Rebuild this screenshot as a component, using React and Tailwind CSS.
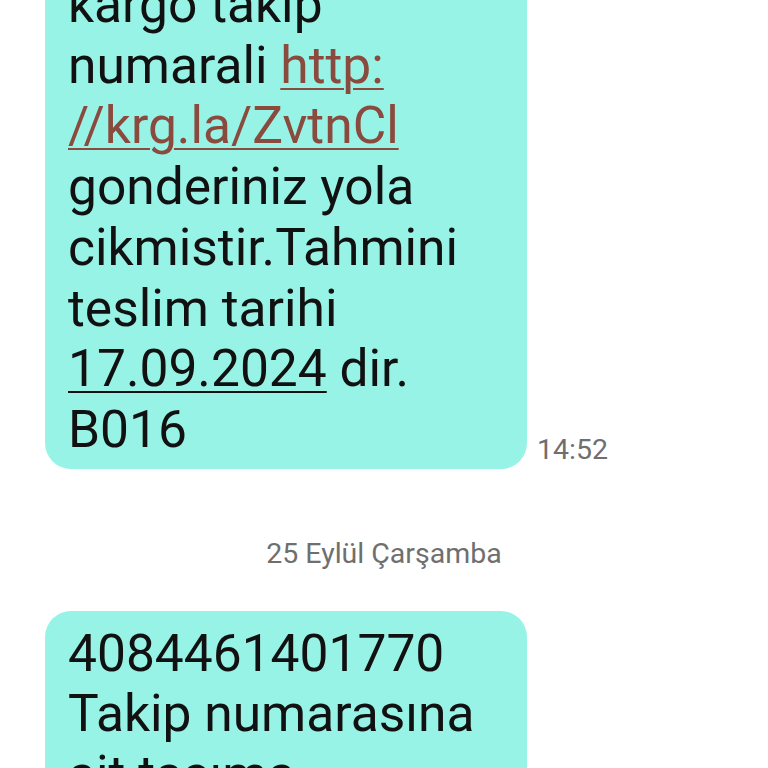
export default function App() {
  const font = { fontFamily: "Roboto, 'Noto Sans', sans-serif" };
  return (
    <div className="h-[768px] w-[768px] overflow-hidden bg-white" style={font}>
      <div className="-mt-[38px] flex items-end pl-[45px]">
        <div className="w-[482px] rounded-[26px] bg-[#98f3e7] pl-[23px] pr-4 pt-[13px] pb-[8px] text-[51.5px] leading-[60.7px] text-[#111]">
          <div>kargo takip</div>
          <div>
            numarali <span className="text-[#8a4a3d] underline decoration-2 underline-offset-[5px]">http:</span>
          </div>
          <div className="text-[#8a4a3d] underline decoration-2 underline-offset-[5px]">//krg.la/ZvtnCl</div>
          <div>gonderiniz yola</div>
          <div>cikmistir.Tahmini</div>
          <div>teslim tarihi</div>
          <div>
            <span className="underline decoration-2 underline-offset-[5px]">17.09.2024</span> dir.
          </div>
          <div>B016</div>
        </div>
        <div className="ml-[10px] pb-[3px] text-[28.5px] leading-[32px] text-[#6f6f6f]">14:52</div>
      </div>
      <div className="mt-[69px] text-center text-[28.5px] leading-[32px] text-[#6f6f6f]">25 Eylül Çarşamba</div>
      <div className="mt-[41px] pl-[45px]">
        <div className="w-[482px] rounded-[26px] bg-[#98f3e7] pl-[23px] pr-4 pt-[13px] pb-[8px] text-[51.5px] leading-[60.7px] text-[#111]">
          <div>4084461401770</div>
          <div>Takip numarasına</div>
          <div>ait taşıma</div>
          <div>bilgileri</div>
        </div>
      </div>
    </div>
  );
}
